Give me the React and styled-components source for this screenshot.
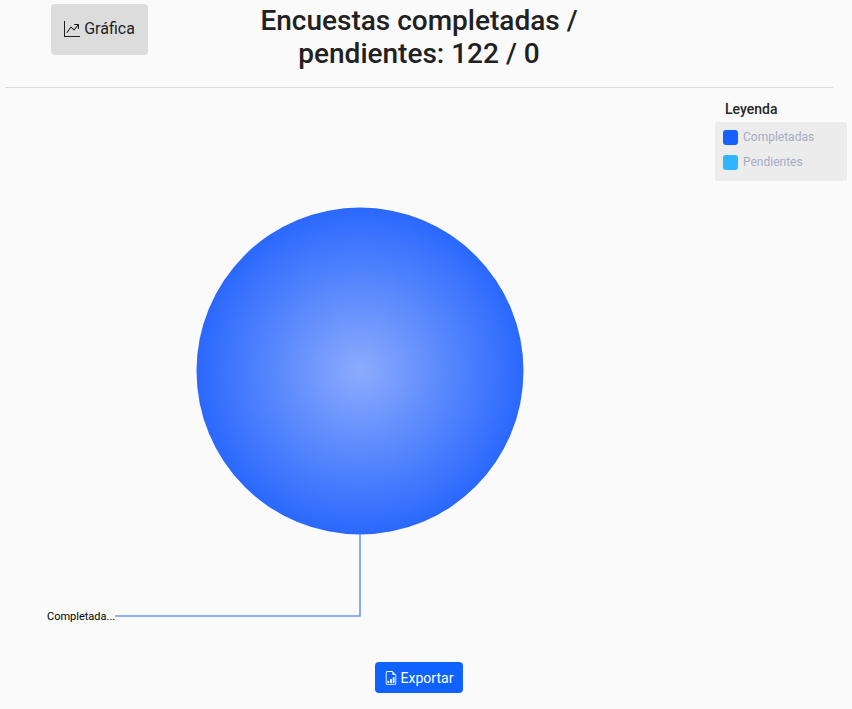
import styled, { createGlobalStyle } from 'styled-components'
import { BsGraphUpArrow, BsFileEarmarkBarGraph } from 'react-icons/bs'

const GlobalStyle = createGlobalStyle`
  html, body {
    margin: 0;
    padding: 0;
    background: #fafafa;
    font-family: Roboto, "Liberation Sans", sans-serif;
  }
`

const Page = styled.div`
  width: 852px;
  height: 709px;
  overflow: hidden;
  box-sizing: border-box;
  padding: 4px 19px 0 5px;
`

const Header = styled.header`
  display: flex;
  align-items: flex-start;
  height: 83px;
  padding-left: 46px;
  border-bottom: 1px solid #dcdcdc;
`

const ChartButton = styled.button`
  width: 97px;
  height: 51px;
  display: flex;
  align-items: center;
  justify-content: center;
  gap: 4px;
  padding: 0 0 2px;
  border: none;
  border-radius: 4px;
  background: #dcdcdc;
  color: #1f1f1f;
  font: 400 16px Roboto, sans-serif;
`

const Title = styled.h1`
  width: 360px;
  margin: 0 0 0 91px;
  color: #212121;
  font-size: 28px;
  font-weight: 500;
  line-height: 33px;
  text-align: center;
`

const ChartArea = styled.div`
  position: relative;
  height: 574px;
`

const ChartSvg = styled.svg`
  display: block;
`

const Legend = styled.aside`
  position: absolute;
  top: 12px;
  left: 710px;
  width: 132px;
`

const LegendTitle = styled.div`
  height: 22px;
  padding-left: 10px;
  color: #262626;
  font-size: 14px;
  font-weight: 500;
  line-height: 18px;
`

const LegendBox = styled.ul`
  display: flex;
  flex-direction: column;
  gap: 10px;
  height: 59px;
  box-sizing: border-box;
  margin: 0;
  padding: 8px 8px 0;
  list-style: none;
  border-radius: 3px;
  background: #ececec;
`

const LegendItem = styled.li`
  display: flex;
  align-items: center;
  gap: 5px;
  height: 15px;
  color: #a5adc4;
  font-size: 12px;
`

const LegendLabel = styled.span`
  padding-bottom: 2px;
`

const Swatch = styled.span`
  width: 15px;
  height: 15px;
  border-radius: 3px;
  background: ${({ $color }) => $color};
`

const Footer = styled.div`
  display: flex;
  justify-content: center;
  padding-right: 1px;
`

const ExportButton = styled.button`
  width: 88px;
  height: 31px;
  display: flex;
  align-items: center;
  justify-content: center;
  gap: 3px;
  padding: 0;
  border: none;
  border-radius: 4px;
  background: #0f62fe;
  color: #fff;
  font: 400 14px Roboto, sans-serif;
`

const legendItems = [
  { label: 'Completadas', color: '#1660fb' },
  { label: 'Pendientes', color: '#2eb5ff' },
]

function PieChart() {
  return (
    <ChartSvg width="828" height="574" viewBox="0 0 828 574">
      <defs>
        <radialGradient id="pieFill">
          <stop offset="0%" stopColor="#8cabfd" />
          <stop offset="100%" stopColor="#2a68fd" />
        </radialGradient>
      </defs>
      <circle cx="355" cy="283" r="163.5" fill="url(#pieFill)" />
      <polyline points="355,446 355,528 110,528" fill="none" stroke="#6c98fc" strokeWidth="1.6" />
      <text x="42" y="532" fontFamily="Roboto, sans-serif" fontSize="11" fill="#000">Completada...</text>
    </ChartSvg>
  )
}

export default function App() {
  return (
    <Page>
      <GlobalStyle />
      <Header>
        <ChartButton><BsGraphUpArrow size={16} />Gráfica</ChartButton>
        <Title>Encuestas completadas / pendientes: 122 / 0</Title>
      </Header>
      <ChartArea>
        <PieChart />
        <Legend>
          <LegendTitle>Leyenda</LegendTitle>
          <LegendBox>
            {legendItems.map((item) => (
              <LegendItem key={item.label}>
                <Swatch $color={item.color} />
                <LegendLabel>{item.label}</LegendLabel>
              </LegendItem>
            ))}
          </LegendBox>
        </Legend>
      </ChartArea>
      <Footer>
        <ExportButton><BsFileEarmarkBarGraph size={14} />Exportar</ExportButton>
      </Footer>
    </Page>
  )
}
